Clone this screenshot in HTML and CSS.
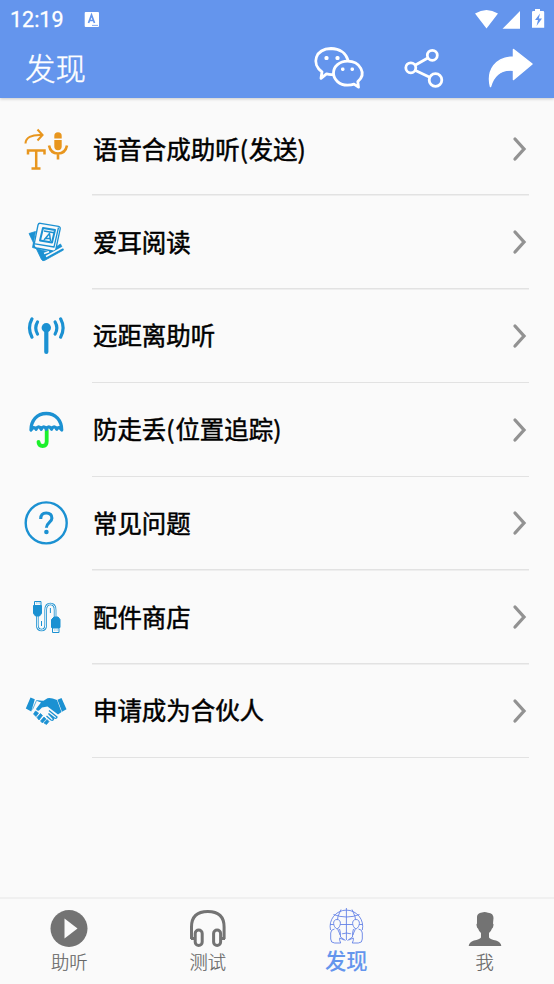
FILE: index.html
```html
<!DOCTYPE html>
<html lang="zh-CN">
<head>
<meta charset="utf-8">
<title>发现</title>
<link rel="stylesheet" href="styles.css">
</head>
<body>
<div class="app">
  <header class="header">
    <div class="status">
      <span class="clock">12:19</span>
      <svg class="input-mark" viewBox="84 10 16 17" width="16" height="17"><rect x="84.700" y="11" width="14.300" height="15" rx="1" fill="#fff"/><path d="M88.500 22l3-8 3 8M89.500 19.500h4" fill="none" stroke="#6495ed" stroke-width="1.700"/><path d="M92 24.400h6" stroke="#6495ed" stroke-width=".8"/></svg>
      <svg class="signals" viewBox="474 7 72 22" width="72" height="22" fill="#fff"><path d="M475 12.500q11.500-7 23 0L486.500 27.500zM502.500 27.800L520 10v17.800zM535 8h5v2h3q1.200 0 1.200 1.200v15.600H532V11.200Q532 10 533.200 10H535z"/><path d="M540 12.500l-5 6.500h3l-1.500 6 5.500-7.500h-3.200z" fill="#6495ed"/></svg>
    </div>
    <div class="toolbar">
      <h1>发现</h1>
      <svg class="actions" viewBox="310 42 228 52" width="228" height="52" fill="none" stroke="#fff" stroke-width="2.800" stroke-linejoin="round" stroke-linecap="round">
        <path d="M332.500 74.600q-3 .3-6-.8l-5.500 4.500 1-6.500C311 64 315 49 331 48.500c9 0 15 5 17 11.700"/>
        <path d="M347.500 61.200c-8 0-14 5.300-14 11.900s6 12 14 12q4 0 6.500-1l4.500 3-.7-5.500c9.500-8 2-20.400-10.300-20.400z"/>
        <g fill="#fff" stroke="none"><rect x="324.500" y="56" width="4" height="4" rx="1.500"/><rect x="335.500" y="56" width="4" height="4" rx="1.500"/><rect x="341" y="67.500" width="3.500" height="3.500" rx="1.400"/><rect x="350.500" y="67.500" width="3.500" height="3.500" rx="1.400"/></g>
        <circle cx="432.300" cy="55.300" r="5"/><circle cx="410.800" cy="67.800" r="5"/><circle cx="435.500" cy="80" r="6.300"/><path d="M415.500 65l12.300-7M415.500 70.500l14.200 6.700"/>
        <path d="M513.500 49.500L532 64l-18.500 15.500V70.300C502 69 494 75 490.500 86.500c-4-16 5-29.500 23-29.500z" fill="#fff" stroke-width="1.500"/>
      </svg>
    </div>
  </header>
  <main class="list">
    <div class="row">
      <svg class="icon" viewBox="22 125.500 48 48" fill="none" stroke="#e8961e" stroke-width="2.100"><path d="M25.500 144c0-6 6-9 16-8.500M37.500 130l5 5.500-5 5.500"/><path d="M28 155v-4h16.500V155M36.200 151v18M31.500 169h9" stroke-width="2.500"/><path d="M54.300 139v-2.500a3.700 3.700 0 0 1 7.400 0v2.500zM54.300 140.500h7.400v6.500a3.700 3.700 0 0 1-7.400 0z" fill="#e8961e" stroke="none"/><path d="M49 146c1 5 4 8 9 8s8-3 9-8M58 154v6" stroke-width="2.600"/></svg>
      <span class="label">语音合成助听<span class="paren">(</span>发送<span class="paren">)</span></span><svg class="chevron" viewBox="0 0 16 26"><path d="M3 3l9 10-9 10"/></svg>
    </div>
    <div class="row">
      <svg class="icon" viewBox="22 218 48 48" fill="none" stroke="#1b91d2" stroke-width="1.300" stroke-linejoin="round"><path d="M29 233.500l6.500-2-3 16 16 4.500 12-8 3 6-19 10.500q-2 .7-3-1z" fill="#1b91d2" stroke-width=".8"/><path d="M38 225q.5-2 2.500-1.700l18 3q2 .5 1.700 2.500L56 248.500q-.5 3-3.500 2.500l-16-3q-3-.8-2.300-4z" fill="#fafafa"/><path d="M35 243.800l19 3.200 4.500-19.500"/><path d="M43 228l12 2-3 12.500-12-2z" stroke-width="2"/><path d="M44 231l10 1.700M44 240l5.500-6.500 1 7.500M45.500 238.500h4.500" stroke-width="1.500"/><path d="M46 256.500l17-9.200M44 253.500l5-1.800" stroke="#fafafa" stroke-width="1.600"/></svg>
      <span class="label">爱耳阅读</span><svg class="chevron" viewBox="0 0 16 26"><path d="M3 3l9 10-9 10"/></svg>
    </div>
    <div class="row">
      <svg class="icon" viewBox="22 312 48 48" fill="none" stroke="#1b91d2" stroke-width="3.200" stroke-linecap="round"><circle cx="46.300" cy="327.800" r="4.700" fill="#1b91d2" stroke="none"/><path d="M46.300 329v23" stroke-width="4.200"/><path d="M32 318.800q-5 9.200 0 18.400M37.500 322q-3.500 6 0 12M60.600 318.800q5 9.200 0 18.400M55.100 322q3.500 6 0 12"/></svg>
      <span class="label">远距离助听</span><svg class="chevron" viewBox="0 0 16 26"><path d="M3 3l9 10-9 10"/></svg>
    </div>
    <div class="row">
      <svg class="icon" viewBox="22 406 48 48" fill="none" stroke-width="3.400" stroke-linecap="round" stroke-linejoin="round"><path d="M46.700 430v11.500q0 4.500-4 4.500-4.200 0-4.200-4.200" stroke="#1bf02a" stroke-width="3.800"/><path d="M31 430c0-9.500 6-16.500 15.300-16.500S61.700 420.500 61.700 430q-2.700-4.500-5-.8-2.500-4.500-5.200 0-2.700-4.500-5.200 0-2.500-4.500-5.100 0-2.500-4.500-5.100 0-2.400-3.700-5.100.8z" stroke="#1b91d2" stroke-width="3.300"/></svg>
      <span class="label">防走丢<span class="paren">(</span>位置追踪<span class="paren">)</span></span><svg class="chevron" viewBox="0 0 16 26"><path d="M3 3l9 10-9 10"/></svg>
    </div>
    <div class="row">
      <svg class="icon" viewBox="22 499.500 48 48" fill="none" stroke="#1b91d2"><circle cx="46.200" cy="523.400" r="20.500" stroke-width="2.400"/><path d="M40.700 519.500c0-4.300 2.300-6 5.500-6 3.500 0 5.700 2 5.700 5.300 0 4-5.500 4.500-5.500 9.500" stroke-width="3.100"/><circle cx="46.400" cy="532.500" r="2.300" fill="#1b91d2" stroke="none"/></svg>
      <span class="label">常见问题</span><svg class="chevron" viewBox="0 0 16 26"><path d="M3 3l9 10-9 10"/></svg>
    </div>
    <div class="row">
      <svg class="icon" viewBox="22 593 48 48" fill="none" stroke="#1b91d2"><path d="M37.300 616v9q0 5 4.200 5t4.200-5v-15q0-6 4.700-6t4.700 6v7" stroke-width="2.600"/><path d="M37.300 616v9q0 5 4.200 5t4.200-5v-15q0-6 4.700-6t4.700 6v7" stroke="#fafafa" stroke-width="1"/><path d="M33.500 605.500h8v8l-2 2.500h-4l-2-2.500zM51.500 627.500h8.500v-8l-2-2.500h-4l-2.500 2.500z" fill="#1b91d2"/><path d="M34.500 601.500h6.500v4h-6.500zM52.500 628h6.500v4.500h-6.500zM36.500 603h.8M38.700 603h.8M54.500 630h.8M56.700 630h.8M41.500 621v5M50.400 608v5"/></svg>
      <span class="label">配件商店</span><svg class="chevron" viewBox="0 0 16 26"><path d="M3 3l9 10-9 10"/></svg>
    </div>
    <div class="row">
      <svg class="icon" viewBox="22 687 48 48" fill="#1b91d2"><path d="M30.500 697.500l4.300 1.700-3.500 12.300-5.500-3zM61.500 698l-4 1.700 4.500 12 4.500-2.500z"/><path d="M36.500 700.500l7 .3 4-2.500q3-1 9.500 1.800l4.500 12-3.500 2.500-10.500-8-5.500 1-3 3q-2.500.3-3-1.500l5-6.500z"/><path d="M33.500 714l2-3 3 2-2.500 3.500zM37 717.500l3.500-4 2 2-3.500 4.500zM40.500 721l3.500-4 2 2-3.500 4zM44 723l3-3.500 2 2-2.500 3z" stroke="#1b91d2" stroke-width=".7" stroke-linejoin="round"/><path d="M32.500 709.500l4-9 5 1" fill="none" stroke="#1b91d2" stroke-width=".7"/><path d="M49 710.500l8 6.500q-.5 2-2.500 1l-6-4.500 5 5.500q-.5 2-2.500 1l-4.500-4" fill="none" stroke="#1b91d2" stroke-width="1.300"/></svg>
      <span class="label">申请成为合伙人</span><svg class="chevron" viewBox="0 0 16 26"><path d="M3 3l9 10-9 10"/></svg>
    </div>
  </main>
  <nav class="nav">
    <div class="tab"><svg viewBox="49 908 40 40"><circle cx="69" cy="928.500" r="18.500" fill="#737373"/><path d="M64.500 918.500L77.500 928.500 64.500 938.500z" fill="#fafafa"/></svg><span>助听</span></div>
    <div class="tab"><svg viewBox="188 908 40 40" fill="none" stroke="#737373" stroke-width="3"><path d="M191.500 939v-12q0-15.500 16.300-15.500t16.300 15.500v12"/><rect x="195.200" y="930" width="7" height="15.500" rx="3.500"/><rect x="213.600" y="930" width="7" height="15.500" rx="3.500"/><path d="M191 938.500h4M221 938.500h4"/></svg><span>测试</span></div>
    <div class="tab active"><svg viewBox="326 906 40 40" fill="none" stroke="#6482e6" stroke-width=".9"><path d="M330.500 930a16.300 16.300 0 1 1 31.800 0M346.400 908v32M330 924.500h32.500M341 909.500q-8 14 0 27M352 909.500q8 14 0 27M333.500 914.500q13 5 26 0M339 934.500q7.500-3 15 0"/><path d="M337 919.500c-5 0-4 7.500 0 9.500 4-2 5-9.500 0-9.500zM356 919.500c-5 0-4 7.500 0 9.500 4-2 5-9.500 0-9.500zM334.500 929q-3.800.5-3.800 4v6q0 4 4 4h6q-1.500-3-1-5l4.500 2M358.500 929q3.800.5 3.800 4v6q0 4-4 4h-6q1.500-3 1-5l-4.500 2M339.500 929q1 2 1 8l5 3.500M353.500 929q-1 2-1 8l-5 3.500" fill="#fafafa"/></svg><span>发现</span></div>
    <div class="tab"><svg viewBox="465 908 40 40" fill="#737373"><path d="M477 917q0-4 5-4.500 2.500-1.300 6 .2 5.500.5 5.500 5.300l-.5 5.500q1 .5.300 2.500-.3 2-1.300 2.500-1 3-3 4.500v4.500q1.500 2 7 3 5 1.500 5.300 5.500h-32.600q.3-4 5.300-5.500 5.500-1 7-3V933q-2-1.500-3-4.500-1-.5-1.300-2.500-.7-2 .3-2.500z"/></svg><span>我</span></div>
  </nav>
</div>
</body>
</html>
```

FILE: styles.css
```css
* { box-sizing: border-box; }
body {
  margin: 0;
  background: #fafafa;
  font-family: "Noto Sans CJK SC", sans-serif;
}
svg { display: block; flex: none; }
.app {
  display: flex;
  flex-direction: column;
  height: 984px;
  overflow: hidden;
}
.header {
  flex: none;
  height: 98px;
  background: #6495ed;
  color: #fff;
  box-shadow: 0 1px 3px rgba(0, 0, 0, .2);
}
.status {
  display: flex;
  align-items: center;
  height: 38px;
  padding: 0 8px 0 10px;
}
.clock {
  width: 74px;
  padding-top: 1px;
  font: 400 21.5px/38px Roboto, sans-serif;
  -webkit-text-stroke: .3px #fff;
}
.signals { margin-left: auto; }
.toolbar {
  display: flex;
  align-items: center;
  justify-content: space-between;
  height: 60px;
  padding: 0 16px 0 25px;
}
h1 {
  margin: 0 0 3px;
  font-size: 30.5px;
  font-weight: 300;
  line-height: 56px;
  -webkit-text-stroke: .4px #fff;
}
.list {
  flex: 1;
  padding-top: 4px;
}
.row {
  display: flex;
  align-items: center;
  height: 93.75px;
  padding: 0 26px 1px 22px;
  background: linear-gradient(#e2e2e2, #e2e2e2) 92px 100% / 437px 1.5px no-repeat;
}
.row:first-child { padding-bottom: 0; }
.icon {
  width: 48px;
  height: 48px;
  margin-right: 23px;
}
.label {
  flex: 1;
  padding-bottom: 1px;
  font-size: 24.45px;
  line-height: 36px;
  color: #000;
  -webkit-text-stroke: .5px #000;
}
.row:first-child .label { padding-bottom: 0; }
.paren { letter-spacing: .8px; }
.chevron {
  width: 16px;
  height: 26px;
  fill: none;
  stroke: #929292;
  stroke-width: 3.3;
  stroke-linecap: round;
}
.nav {
  flex: none;
  display: grid;
  grid-template-columns: repeat(4, 1fr);
  height: 87px;
  border-top: 2px solid #f0f0f0;
}
.tab {
  display: flex;
  flex-direction: column;
  align-items: center;
  padding-top: 9px;
  font-size: 18.3px;
  font-weight: 300;
  line-height: 26px;
  color: #666;
  -webkit-text-stroke: .2px #666;
}
.tab svg { width: 40px; height: 40px; }
.active {
  padding-top: 7px;
  font-size: 21.3px;
  font-weight: 500;
  line-height: 28px;
  color: #6495ed;
  -webkit-text-stroke: 0;
}
```
